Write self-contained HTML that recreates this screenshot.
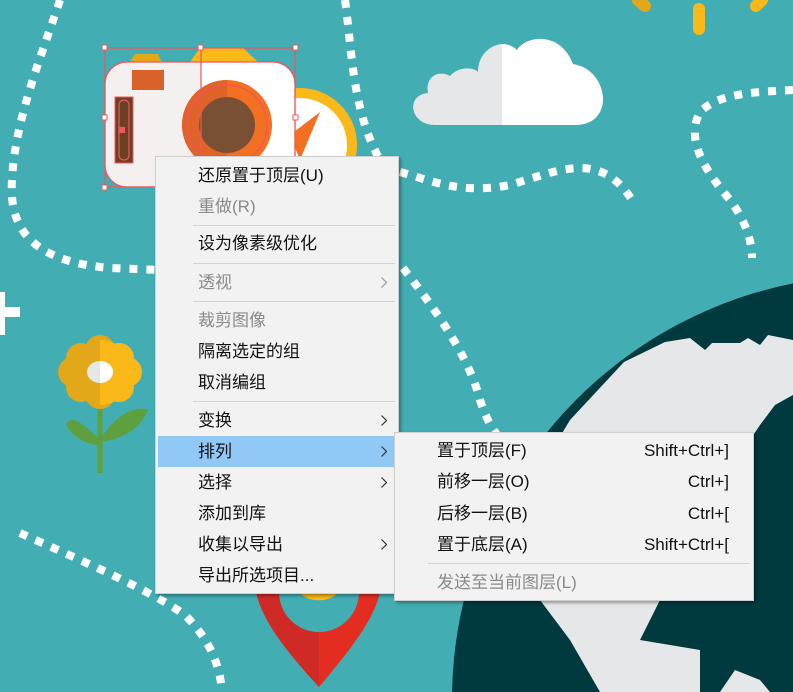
<!DOCTYPE html>
<html><head><meta charset="utf-8"><style>
html,body{margin:0;padding:0;width:793px;height:692px;overflow:hidden;background:#42aeb4;position:relative}
svg.bg{position:absolute;left:0;top:0}
.menu{position:absolute;background:#f2f2f2;border:1px solid #cfcfcf;box-shadow:2px 2px 3px rgba(0,0,0,.35);font-family:"Liberation Sans","Noto Sans CJK SC",sans-serif;font-size:17px;color:#111;overflow:hidden}
.it{position:absolute;left:0;right:0;height:31px;line-height:31px}
.it span{position:absolute;left:42px}
.dis{color:#8a8a8a}
.sep{position:absolute;height:1px;background:#d3d3d3}
.arr{position:absolute;right:11px;top:10px;width:6px;height:11px}
.hl{background:#91c8f6}
.sc{position:absolute;right:24px;top:0;font-weight:normal}
</style></head><body>
<svg class="bg" width="793" height="692" viewBox="0 0 793 692">
<g fill="none" stroke="#fff" stroke-width="8" stroke-dasharray="8 9">
<path d="M60 0 C40 60 15 120 12 180 C8 235 40 262 110 268 L160 270"/>
<path d="M400 172 C430 180 460 195 510 185 C560 170 600 150 632 200"/>
<path d="M793 90 C760 92 720 92 700 112 C685 140 705 170 730 200 C745 220 752 240 752 258"/>
<path d="M345 0 C352 50 352 110 380 160"/>
<path d="M403 268 C440 315 470 360 480 400 C490 430 500 440 505 440"/>
<path d="M20 533 C80 560 150 590 185 615 C210 640 220 665 222 692"/>
</g>
<g stroke="#fbb919" stroke-width="12" stroke-linecap="round">
<line x1="638" y1="0" x2="645" y2="6" stroke="#e2a81a"/>
<line x1="699" y1="9" x2="699" y2="29"/>
<line x1="762" y1="0" x2="756" y2="6"/>
</g>
<path d="M435 125 C410 125 405 95 428 93 C425 75 440 70 450 76 C460 65 475 68 478 72 C478 55 490 45 502 44 L502 125 Z" fill="#e6e7e8"/>
<path d="M502 44 C510 44 515 48 517 50 C525 36 560 30 573 64 C600 68 610 100 598 115 C593 122 585 125 575 125 L502 125 Z" fill="#fff"/>
<circle cx="877" cy="700" r="425" fill="#003a3f"/>
<path d="M624 362 L665 342 L690 338 L705 350 L712 343 L740 343 L748 338 L760 345 L768 335 L793 340 L793 395 L775 405 L760 425 L750 440 L745 470 L730 520 L720 560 L705 598 L660 600 L640 640 L700 650 L700 692 L600 692 L570 640 L540 600 L520 560 L540 470 L570 420 Z" fill="#e6e7e8"/>
<path d="M720 692 L735 670 L760 680 L770 692 Z" fill="#e6e7e8"/>
<circle cx="300" cy="145" r="57" fill="#fbb919"/>
<circle cx="300" cy="145" r="47" fill="#fff"/>
<path d="M320 112 L300 160 L290 135 Z" fill="#f36f21"/>
<path d="M128 65 L135 54 L158 54 L163 65 Z" fill="#e2a81a"/>
<path d="M190 62 L200 48 L243 48 L258 62 Z" fill="#fbb919"/>
<rect x="105" y="62" width="190" height="125" rx="22" fill="#f4f0ef"/>
<path d="M201 62 H273 A22 22 0 0 1 295 84 V165 A22 22 0 0 1 273 187 H201 Z" fill="#fff"/>
<rect x="132" y="70" width="32" height="20" fill="#d8622a"/>
<rect x="115" y="97" width="18" height="66" fill="#6b4125" stroke="#f0565a" stroke-width="1"/>
<circle cx="227" cy="125" r="45" fill="#f36f21"/>
<path d="M227 80 A45 45 0 0 0 227 170 Z" fill="#e0632a"/>
<circle cx="227" cy="125" r="28" fill="#7a5034"/>
<g fill="none" stroke="#f0565a" stroke-width="1.2">
<rect x="105" y="48" width="190" height="139"/>
<line x1="201" y1="48" x2="201" y2="187"/>
<rect x="105" y="62" width="190" height="125" rx="22"/>
<circle cx="227" cy="125" r="40"/>
<rect x="119" y="100" width="10" height="60" rx="5"/>
</g>
<g fill="#fff" stroke="#f0565a" stroke-width="1">
<rect x="102" y="45" width="5" height="5"/><rect x="198" y="45" width="5" height="5"/><rect x="293" y="45" width="5" height="5"/>
<rect x="102" y="115" width="5" height="5"/><rect x="293" y="115" width="5" height="5"/><rect x="102" y="185" width="5" height="5"/>
</g>
<rect x="119" y="127" width="6" height="6" fill="#f0565a"/>
<path d="M0 292 h5 v15 h15 v10 h-15 v18 h-5 Z" fill="#fff"/>
<line x1="100" y1="400" x2="100" y2="473" stroke="#5ea03e" stroke-width="5"/>
<path d="M100 440 C80 420 70 415 66 425 C75 440 90 445 100 445 Z" fill="#5ea03e"/>
<path d="M100 440 C115 415 135 405 148 410 C140 430 120 440 100 442 Z" fill="#5ea03e"/>
<g fill="#e2a81a">
<circle cx="100" cy="350" r="15"/><circle cx="81" cy="358" r="15"/><circle cx="73" cy="372" r="15"/><circle cx="81" cy="387" r="15"/><circle cx="100" cy="394" r="15"/>
</g>
<g fill="#fbb919">
<circle cx="119" cy="358" r="15"/><circle cx="127" cy="372" r="15"/><circle cx="119" cy="387" r="15"/>
<path d="M100 340 A32 32 0 0 1 100 405 Z"/>
</g>
<ellipse cx="100" cy="372" rx="13" ry="11" fill="#e6e7e8"/>
<path d="M100 361 A13 11 0 0 1 100 383 Z" fill="#fff"/>
<path d="M256 592 C262 620 285 650 319 687 C350 650 374 620 380 592 Z" fill="#e32d20"/>
<path d="M256 592 C262 620 285 650 319 687 L319 592 Z" fill="#cf2a25"/>
<path d="M279 592 A40 40 0 0 0 359 592 Z" fill="#42aeb4"/>
<path d="M300 592 A20 12 0 0 0 338 592 Z" fill="#fbb919"/>
</svg>

<div class="menu" style="left:155px;top:156px;width:242px;height:436px">
<div class="it" style="top:3px"><span>还原置于顶层(U)</span></div>
<div class="it dis" style="top:34px"><span>重做(R)</span></div>
<div class="sep" style="left:37px;right:3px;top:68px"></div>
<div class="it" style="top:71px"><span>设为像素级优化</span></div>
<div class="sep" style="left:37px;right:3px;top:106px"></div>
<div class="it dis" style="top:110px"><span>透视</span><svg class="arr" viewBox="0 0 6 11"><polyline points="0.5,0.5 5.5,5.5 0.5,10.5" fill="none" stroke="#999" stroke-width="1.2"/></svg></div>
<div class="sep" style="left:37px;right:3px;top:144px"></div>
<div class="it dis" style="top:148px"><span>裁剪图像</span></div>
<div class="it" style="top:179px"><span>隔离选定的组</span></div>
<div class="it" style="top:210px"><span>取消编组</span></div>
<div class="sep" style="left:37px;right:3px;top:244px"></div>
<div class="it" style="top:248px"><span>变换</span><svg class="arr" viewBox="0 0 6 11"><polyline points="0.5,0.5 5.5,5.5 0.5,10.5" fill="none" stroke="#333" stroke-width="1.2"/></svg></div>
<div class="it hl" style="top:279px;left:2px;right:2px"><span style="left:40px">排列</span><svg class="arr" style="right:9px" viewBox="0 0 6 11"><polyline points="0.5,0.5 5.5,5.5 0.5,10.5" fill="none" stroke="#333" stroke-width="1.2"/></svg></div>
<div class="it" style="top:310px"><span>选择</span><svg class="arr" viewBox="0 0 6 11"><polyline points="0.5,0.5 5.5,5.5 0.5,10.5" fill="none" stroke="#333" stroke-width="1.2"/></svg></div>
<div class="it" style="top:341px"><span>添加到库</span></div>
<div class="it" style="top:372px"><span>收集以导出</span><svg class="arr" viewBox="0 0 6 11"><polyline points="0.5,0.5 5.5,5.5 0.5,10.5" fill="none" stroke="#333" stroke-width="1.2"/></svg></div>
<div class="it" style="top:403px"><span>导出所选项目...</span></div>
</div>

<div class="menu" style="left:394px;top:432px;width:358px;height:167px">
<div class="it" style="top:2px"><span>置于顶层(F)</span><b class="sc">Shift+Ctrl+]</b></div>
<div class="it" style="top:33px"><span>前移一层(O)</span><b class="sc">Ctrl+]</b></div>
<div class="it" style="top:65px"><span>后移一层(B)</span><b class="sc">Ctrl+[</b></div>
<div class="it" style="top:96px"><span>置于底层(A)</span><b class="sc">Shift+Ctrl+[</b></div>
<div class="sep" style="left:33px;right:3px;top:130px"></div>
<div class="it dis" style="top:134px"><span>发送至当前图层(L)</span></div>
</div>
</body></html>
